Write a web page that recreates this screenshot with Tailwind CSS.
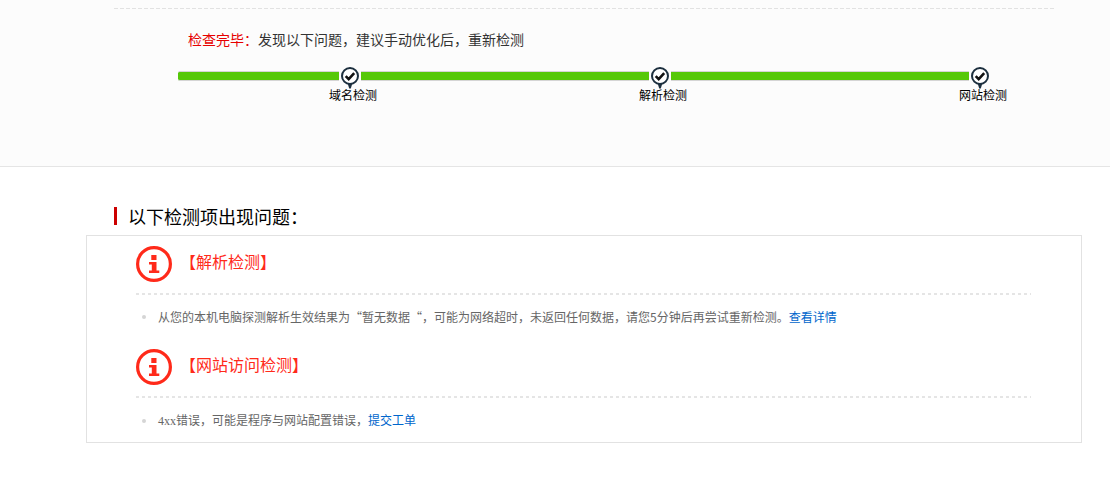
<!DOCTYPE html>
<html lang="zh-CN">
<head>
    <meta charset="UTF-8">
    <meta name="viewport" content="width=device-width, initial-scale=1.0">
    <title>网站检测</title>
    <script src="https://cdn.jsdelivr.net/npm/@tailwindcss/browser@4"></script>
</head>
<body class="bg-white font-['Noto_Sans_CJK_SC',sans-serif] text-black">

    <!-- 检测进度 -->
    <section class="bg-[#fcfcfc] border-b border-[#e5e5e5] pt-2 pb-[65px]">
        <div class="ml-[114px] mr-14 h-px bg-[repeating-linear-gradient(90deg,#e2e2e2_0_4px,transparent_4px_6px)]"></div>

        <p class="mt-5 ml-[188px] text-sm/5 text-[#333]"><span class="text-[#e60000]">检查完毕：</span>发现以下问题，建议手动优化后，重新检测</p>

        <ol class="mt-4 ml-[178px] mr-[119px] flex items-start">
            <li class="flex-[161] mt-1.5 h-2.5 rounded-l-xs bg-[#55c808] border-y border-[#d5d5d5]" aria-hidden="true"></li>
            <li class="w-[22px] flex flex-col items-start">
                <svg class="w-[22px] h-6" viewBox="0 0 22 24" fill="none">
                    <path d="M8.5 18h5L11.8 23.5h-1.6z" fill="#1c2f3e"/>
                    <circle cx="11" cy="11" r="8" fill="#fff" stroke="#1c2f3e" stroke-width="2"/>
                    <path d="M6.7 11.2l3 3 5.5-6" stroke="#111" stroke-width="2.6"/>
                </svg>
                <span class="-ml-2.5 text-xs/3 whitespace-nowrap">域名检测</span>
            </li>
            <li class="flex-[288] mt-1.5 h-2.5 bg-[#55c808] border-y border-[#d5d5d5]" aria-hidden="true"></li>
            <li class="w-[22px] flex flex-col items-start">
                <svg class="w-[22px] h-6" viewBox="0 0 22 24" fill="none">
                    <path d="M8.5 18h5L11.8 23.5h-1.6z" fill="#1c2f3e"/>
                    <circle cx="11" cy="11" r="8" fill="#fff" stroke="#1c2f3e" stroke-width="2"/>
                    <path d="M6.7 11.2l3 3 5.5-6" stroke="#111" stroke-width="2.6"/>
                </svg>
                <span class="-ml-2.5 text-xs/3 whitespace-nowrap">解析检测</span>
            </li>
            <li class="flex-[298] mt-1.5 h-2.5 bg-[#55c808] border-y border-[#d5d5d5]" aria-hidden="true"></li>
            <li class="w-[22px] flex flex-col items-start">
                <svg class="w-[22px] h-6" viewBox="0 0 22 24" fill="none">
                    <path d="M8.5 18h5L11.8 23.5h-1.6z" fill="#1c2f3e"/>
                    <circle cx="11" cy="11" r="8" fill="#fff" stroke="#1c2f3e" stroke-width="2"/>
                    <path d="M6.7 11.2l3 3 5.5-6" stroke="#111" stroke-width="2.6"/>
                </svg>
                <span class="-ml-2.5 text-xs/3 whitespace-nowrap">网站检测</span>
            </li>
        </ol>
    </section>

    <!-- 问题列表 -->
    <section class="mt-10 ml-[86px] mr-7">
        <h2 class="ml-7 border-l-3 border-[#c00] pl-[11px] text-lg/[18px]">以下检测项出现问题：</h2>

        <div class="mt-2.5 border border-[#e2e2e2] pt-2.5 pb-3 pl-[49px] pr-[50px]">
            <article>
                <div class="flex items-start gap-2">
                    <svg class="w-9 h-9" viewBox="0 0 36 36">
                        <circle cx="18" cy="18" r="16.4" fill="none" stroke="#ff2a1a" stroke-width="3.2"/>
                        <path d="M15.3 9h5.2v5h-5.2zM13 16h7.5v8.5h2.8V27H13v-2.5h2.8v-6H13z" fill="#ff2a1a"/>
                    </svg>
                    <h3 class="mt-[3px] text-base/6 text-[#ff2a1a]">【解析检测】</h3>
                </div>
                <div class="mt-[11px] h-0.5 bg-[repeating-linear-gradient(90deg,#e5e5e5_0_3px,transparent_3px_6px)]"></div>
                <ul class="pt-[13px] pb-[23px]">
                    <li class="flex items-center text-xs/[18px] text-[#666]">
                        <span class="ml-1.5 mr-3 w-1 h-1 rounded-full bg-[#d5d5d5]"></span>
                        <p>从您的本机电脑探测解析生效结果为“暂无数据“，可能为网络超时，未返回任何数据，请您5分钟后再尝试重新检测。<a href="#" class="text-[#0066cc]">查看详情</a></p>
                    </li>
                </ul>
            </article>

            <article>
                <div class="flex items-start gap-2">
                    <svg class="w-9 h-9" viewBox="0 0 36 36">
                        <circle cx="18" cy="18" r="16.4" fill="none" stroke="#ff2a1a" stroke-width="3.2"/>
                        <path d="M15.3 9h5.2v5h-5.2zM13 16h7.5v8.5h2.8V27H13v-2.5h2.8v-6H13z" fill="#ff2a1a"/>
                    </svg>
                    <h3 class="mt-[3px] text-base/6 text-[#ff2a1a]">【网站访问检测】</h3>
                </div>
                <div class="mt-[11px] h-0.5 bg-[repeating-linear-gradient(90deg,#e5e5e5_0_3px,transparent_3px_6px)]"></div>
                <ul class="pt-[13px]">
                    <li class="flex items-center text-xs/[18px] text-[#666]">
                        <span class="ml-1.5 mr-3 w-1 h-1 rounded-full bg-[#d5d5d5]"></span>
                        <p><span class="font-['Liberation_Serif',serif]">4xx</span>错误，可能是程序与网站配置错误，<a href="#" class="text-[#0066cc]">提交工单</a></p>
                    </li>
                </ul>
            </article>
        </div>
    </section>

</body>
</html>
